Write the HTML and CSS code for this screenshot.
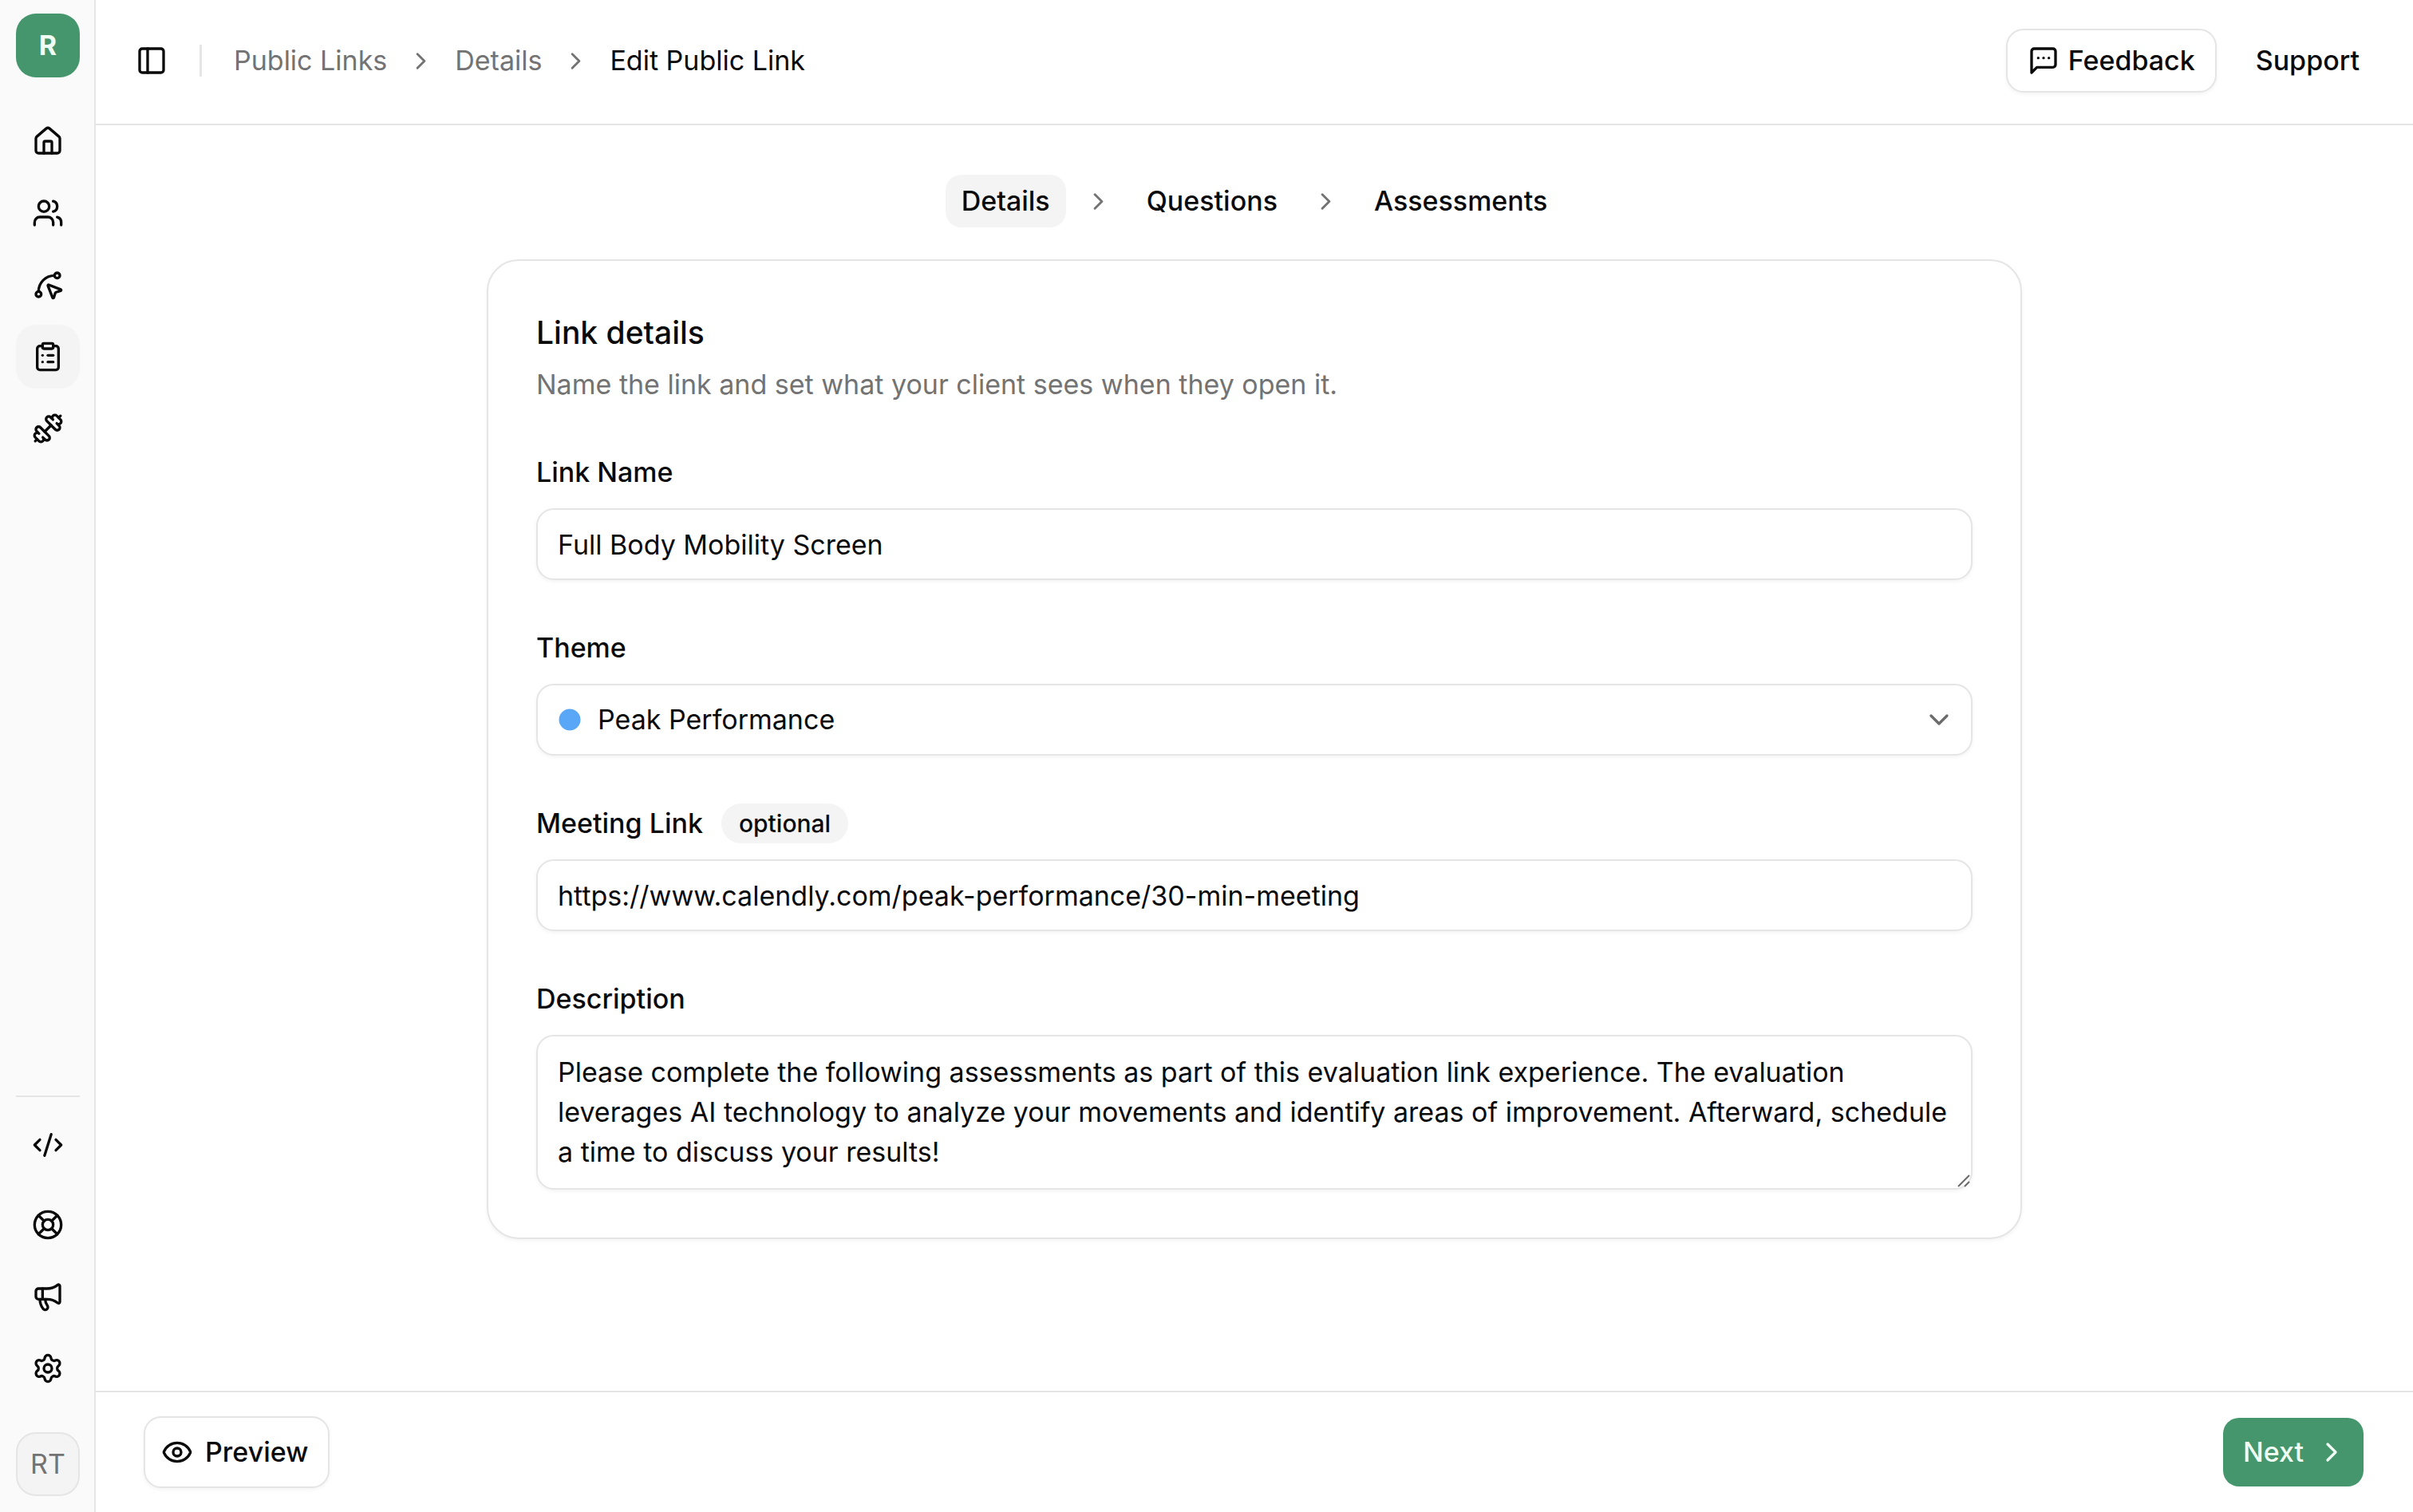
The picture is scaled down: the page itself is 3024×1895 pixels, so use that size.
FILE: index.html
```html
<!DOCTYPE html>
<html lang="en">
<head>
<meta charset="utf-8">
<meta name="viewport" content="width=device-width, initial-scale=1">
<title>Edit Public Link</title>
<link rel="stylesheet" href="styles.css">
</head>
<body class="app">
<aside class="sidebar">
  <a class="logo" href="#" aria-label="Workspace">R</a>
  <nav class="side-nav" aria-label="Main">
    <a class="side-link" href="#" aria-label="Home"><svg class="icon" viewBox="0 0 24 24"><path d="M15 21v-8a1 1 0 0 0-1-1h-4a1 1 0 0 0-1 1v8"/><path d="M3 10a2 2 0 0 1 .709-1.528l7-5.999a2 2 0 0 1 2.582 0l7 5.999A2 2 0 0 1 21 10v9a2 2 0 0 1-2 2H5a2 2 0 0 1-2-2z"/></svg></a>
    <a class="side-link" href="#" aria-label="Clients"><svg class="icon" viewBox="0 0 24 24"><path d="M16 21v-2a4 4 0 0 0-4-4H6a4 4 0 0 0-4 4v2"/><circle cx="9" cy="7" r="4"/><path d="M22 21v-2a4 4 0 0 0-3-3.87"/><path d="M16 3.13a4 4 0 0 1 0 7.75"/></svg></a>
    <a class="side-link" href="#" aria-label="Movements"><svg class="icon" viewBox="0 0 24 24"><path d="M12.034 12.681a.498.498 0 0 1 .647-.647l9 3.5a.5.5 0 0 1-.033.943l-3.444 1.068a1 1 0 0 0-.66.66l-1.067 3.443a.5.5 0 0 1-.943.033z"/><path d="M5 17A12 12 0 0 1 17 5"/><circle cx="19" cy="5" r="2"/><circle cx="5" cy="19" r="2"/></svg></a>
    <a class="side-link side-link-active" href="#" aria-label="Assessments" aria-current="page"><svg class="icon" viewBox="0 0 24 24"><rect x="8" y="2" width="8" height="4" rx="1"/><path d="M16 4h2a2 2 0 0 1 2 2v14a2 2 0 0 1-2 2H6a2 2 0 0 1-2-2V6a2 2 0 0 1 2-2h2"/><path d="M12 11h4"/><path d="M12 16h4"/><path d="M8 11h.01"/><path d="M8 16h.01"/></svg></a>
    <a class="side-link" href="#" aria-label="Exercises"><svg class="icon" viewBox="0 0 24 24"><path d="M17.596 12.768a2 2 0 1 0 2.829-2.829l-1.768-1.767a2 2 0 0 0 2.828-2.829l-2.828-2.828a2 2 0 0 0-2.829 2.828l-1.767-1.768a2 2 0 1 0-2.829 2.829z"/><path d="m2.5 21.5 1.4-1.4"/><path d="m20.1 3.9 1.4-1.4"/><path d="M5.343 21.485a2 2 0 1 0 2.829-2.828l1.767 1.768a2 2 0 1 0 2.829-2.829l-6.364-6.364a2 2 0 1 0-2.829 2.829l1.768 1.767a2 2 0 0 0-2.828 2.829z"/><path d="m9.6 14.4 4.8-4.8"/></svg></a>
  </nav>
  <div class="side-bottom">
    <hr class="side-rule">
    <a class="side-link" href="#" aria-label="Developers"><svg class="icon" viewBox="0 0 24 24"><path d="m18 16 4-4-4-4"/><path d="m6 8-4 4 4 4"/><path d="m14.5 4-5 16"/></svg></a>
    <nav class="side-nav" aria-label="Secondary">
      <a class="side-link" href="#" aria-label="Help"><svg class="icon" viewBox="0 0 24 24"><circle cx="12" cy="12" r="10"/><path d="m4.93 4.93 4.24 4.24"/><path d="m14.83 9.17 4.24-4.24"/><path d="m14.83 14.83 4.24 4.24"/><path d="m9.17 14.83-4.24 4.24"/><circle cx="12" cy="12" r="4"/></svg></a>
      <a class="side-link" href="#" aria-label="News"><svg class="icon" viewBox="0 0 24 24"><path d="M11 6a13 13 0 0 0 8.4-2.8A1 1 0 0 1 21 4v12a1 1 0 0 1-1.6.8A13 13 0 0 0 11 14H5a2 2 0 0 1-2-2V8a2 2 0 0 1 2-2z"/><path d="M6 14a12 12 0 0 0 2.4 7.2 2 2 0 0 0 3.2-2.4A8 8 0 0 1 10 14"/><path d="M8 6v8"/></svg></a>
      <a class="side-link" href="#" aria-label="Settings"><svg class="icon" viewBox="0 0 24 24"><path d="M9.671 4.136a2.34 2.34 0 0 1 4.659 0 2.34 2.34 0 0 0 3.319 1.915 2.34 2.34 0 0 1 2.33 4.033 2.34 2.34 0 0 0 0 3.831 2.34 2.34 0 0 1-2.33 4.033 2.34 2.34 0 0 0-3.319 1.915 2.34 2.34 0 0 1-4.659 0 2.34 2.34 0 0 0-3.32-1.915 2.34 2.34 0 0 1-2.33-4.033 2.34 2.34 0 0 0 0-3.831A2.34 2.34 0 0 1 6.35 6.051a2.34 2.34 0 0 0 3.319-1.915"/><circle cx="12" cy="12" r="3"/></svg></a>
    </nav>
    <button class="avatar" type="button">RT</button>
  </div>
</aside>
<div class="page">
  <header class="topbar">
    <button class="panel-toggle" type="button" aria-label="Toggle sidebar"><svg class="icon" viewBox="0 0 24 24"><rect x="3" y="3" width="18" height="18" rx="2"/><path d="M9 3v18"/></svg></button>
    <span class="topbar-divider"></span>
    <nav class="crumbs" aria-label="Breadcrumb">
      <a class="crumb" href="#">Public Links</a>
      <svg class="icon icon-small" viewBox="0 0 24 24"><path d="m9 18 6-6-6-6"/></svg>
      <a class="crumb" href="#">Details</a>
      <svg class="icon icon-small" viewBox="0 0 24 24"><path d="m9 18 6-6-6-6"/></svg>
      <span class="crumb crumb-current" aria-current="page">Edit Public Link</span>
    </nav>
    <div class="topbar-actions">
      <button class="button button-outline button-compact" type="button"><svg class="icon" viewBox="0 0 24 24"><path d="M21 15a2 2 0 0 1-2 2H7l-4 4V5a2 2 0 0 1 2-2h14a2 2 0 0 1 2 2z"/><path d="M8 10h.01"/><path d="M12 10h.01"/><path d="M16 10h.01"/></svg>Feedback</button>
      <a class="support" href="#">Support</a>
    </div>
  </header>
  <main class="content">
    <nav class="steps" aria-label="Steps">
      <a class="step step-active" href="#" aria-current="step">Details</a>
      <svg class="icon icon-small" viewBox="0 0 24 24"><path d="m9 18 6-6-6-6"/></svg>
      <a class="step" href="#">Questions</a>
      <svg class="icon icon-small" viewBox="0 0 24 24"><path d="m9 18 6-6-6-6"/></svg>
      <a class="step" href="#">Assessments</a>
    </nav>
    <form class="card">
      <div class="card-head">
        <h1 class="card-title">Link details</h1>
        <p class="card-text">Name the link and set what your client sees when they open it.</p>
      </div>
      <div class="field">
        <label class="label" for="link-name">Link Name</label>
        <input class="control" id="link-name" type="text" value="Full Body Mobility Screen">
      </div>
      <div class="field">
        <label class="label" for="theme">Theme</label>
        <div class="control-wrap">
          <select class="control control-select" id="theme"><option>Peak Performance</option></select>
          <svg class="theme-dot" viewBox="0 0 30 30"><circle cx="15" cy="15" r="13.5"/></svg>
          <svg class="icon select-arrow" viewBox="0 0 24 24"><path d="m6 9 6 6 6-6"/></svg>
        </div>
      </div>
      <div class="field">
        <div class="label-row">
          <label class="label" for="meeting-link">Meeting Link</label>
          <span class="badge">optional</span>
        </div>
        <input class="control" id="meeting-link" type="text" value="https://www.calendly.com/peak-performance/30-min-meeting">
      </div>
      <div class="field">
        <label class="label" for="description">Description</label>
        <div class="control-wrap">
          <textarea class="control control-area" id="description" rows="3">Please complete the following assessments as part of this evaluation link experience. The evaluation leverages AI technology to analyze your movements and identify areas of improvement. Afterward, schedule a time to discuss your results!</textarea>
          <svg class="grip" viewBox="0 0 16 16"><path d="M1 15 15 1M9 15l6-6"/></svg>
        </div>
      </div>
    </form>
  </main>
  <footer class="footer">
    <button class="button button-outline button-icon-start" type="button"><svg class="icon" viewBox="0 0 24 24"><path d="M2.062 12.348a1 1 0 0 1 0-.696 10.75 10.75 0 0 1 19.876 0 1 1 0 0 1 0 .696 10.75 10.75 0 0 1-19.876 0"/><circle cx="12" cy="12" r="3"/></svg>Preview</button>
    <button class="button button-primary button-icon-end" type="button">Next<svg class="icon" viewBox="0 0 24 24"><path d="m9 18 6-6-6-6"/></svg></button>
  </footer>
</div>
</body>
</html>
```
FILE: styles.css
```css
:root {
  --text: #0a0a0a;
  --muted: #737373;
  --line: #e5e5e5;
  --soft: #f4f4f4;
  --green: #45966d;
  --shadow: 0 2px 5px rgba(0, 0, 0, 0.05);
}

* {
  box-sizing: border-box;
}

.app {
  margin: 0;
  min-height: 100vh;
  display: grid;
  grid-template-columns: 120px minmax(0, 1fr);
  background: #fff;
  color: var(--text);
  font: 400 34px/50px Inter, "Liberation Sans", sans-serif;
}

a {
  color: inherit;
  text-decoration: none;
}

button,
input,
select,
textarea {
  font: inherit;
  color: inherit;
}

.icon {
  flex: none;
  width: 40px;
  height: 40px;
  fill: none;
  stroke: currentColor;
  stroke-width: 2;
  stroke-linecap: round;
  stroke-linejoin: round;
}

.icon-small {
  width: 35px;
  height: 35px;
  color: var(--muted);
}

/* Sidebar */
.sidebar {
  display: flex;
  flex-direction: column;
  gap: 40px;
  padding: 17px 18px 20px 20px;
  background: #fafafa;
  border-right: 2px solid var(--line);
}

.logo,
.side-link,
.avatar {
  display: flex;
  align-items: center;
  justify-content: center;
  width: 80px;
  height: 80px;
  border-radius: 25px;
}

.logo {
  background: var(--green);
  color: #f0fdf4;
  font-weight: 700;
}

.side-nav {
  display: flex;
  flex-direction: column;
  gap: 10px;
}

.side-link-active {
  background: var(--soft);
}

.side-bottom {
  display: flex;
  flex-direction: column;
  gap: 20px;
  margin-top: auto;
}

.side-rule {
  width: 100%;
  height: 2px;
  margin: 0;
  border: 0;
  background: var(--line);
}

.avatar {
  margin-top: 20px;
  padding: 0;
  background: var(--soft);
  border: 2px solid var(--line);
  color: var(--muted);
}

/* Page frame */
.page {
  display: flex;
  flex-direction: column;
  min-width: 0;
}

.topbar {
  display: flex;
  align-items: center;
  padding: 36px 42px 39px 50px;
  border-bottom: 2px solid var(--line);
}

.panel-toggle {
  display: flex;
  padding: 0;
  border: 0;
  background: none;
}

.topbar-divider {
  width: 3px;
  height: 40px;
  margin: 0 40px;
  background: var(--line);
}

.crumbs {
  display: flex;
  align-items: center;
  gap: 25px;
}

.crumb {
  color: var(--muted);
}

.crumb-current {
  color: var(--text);
}

.topbar-actions {
  display: flex;
  align-items: center;
  gap: 24px;
  margin-left: auto;
}

.support {
  padding: 0 25px;
  font-weight: 500;
}

.button {
  display: flex;
  align-items: center;
  gap: 15px;
  height: 90px;
  padding: 0 25px;
  border: 2px solid transparent;
  border-radius: 22px;
  background-clip: padding-box;
  font-weight: 500;
}

.button-outline {
  background-color: #fff;
  border-color: var(--line);
  box-shadow: var(--shadow);
}

.button-primary {
  background-color: var(--green);
  color: #f0fdf4;
}

.button-compact {
  height: 80px;
  gap: 11px;
}

.button-icon-start {
  padding-left: 20px;
}

.button-icon-end {
  padding-right: 20px;
}

.footer {
  display: flex;
  justify-content: space-between;
  padding: 30px 60px;
  border-top: 2px solid var(--line);
}

/* Form */
.content {
  flex: 1;
  display: flex;
  flex-direction: column;
  align-items: center;
  gap: 40px;
  padding: 62px 60px;
}

.steps {
  display: flex;
  align-items: center;
  gap: 23px;
}

.step {
  padding: 8px 20px;
  border-radius: 20px;
  font-weight: 500;
}

.step-active {
  background: var(--soft);
}

.card {
  display: flex;
  flex-direction: column;
  gap: 60px;
  width: 100%;
  max-width: 1924px;
  padding: 60px;
  border: 2px solid var(--line);
  border-radius: 40px;
  box-shadow: var(--shadow);
}

.card-head {
  display: flex;
  flex-direction: column;
  gap: 10px;
}

.card-title {
  margin: 0;
  font-size: 39px;
  line-height: 60px;
  font-weight: 500;
}

.card-text {
  margin: 0;
  color: var(--muted);
}

.field {
  display: flex;
  flex-direction: column;
  gap: 20px;
}

.label {
  font-weight: 500;
}

.label-row {
  display: flex;
  align-items: center;
  gap: 23px;
}

.badge {
  padding: 5px 22px;
  border-radius: 25px;
  background: var(--soft);
  font-size: 30px;
  line-height: 40px;
  font-weight: 500;
}

.control {
  display: block;
  width: 100%;
  height: 90px;
  padding: 0 25px;
  border: 2px solid var(--line);
  border-radius: 22px;
  background: #fff;
  box-shadow: var(--shadow);
}

.control-wrap {
  position: relative;
}

.control-select {
  appearance: none;
  padding: 0 75px;
}

.control-area {
  height: auto;
  padding: 20px 20px 20px 25px;
  resize: none;
  overflow: hidden;
}

.theme-dot {
  position: absolute;
  left: 27px;
  top: 30px;
  width: 30px;
  height: 30px;
  fill: #5ba7f7;
  pointer-events: none;
}

.select-arrow {
  position: absolute;
  right: 22px;
  top: 25px;
  color: #6b6b6b;
  pointer-events: none;
}

.grip {
  position: absolute;
  right: 3px;
  bottom: 3px;
  width: 16px;
  height: 16px;
  fill: none;
  stroke: #6b6b6b;
  stroke-width: 2;
  pointer-events: none;
}
```
